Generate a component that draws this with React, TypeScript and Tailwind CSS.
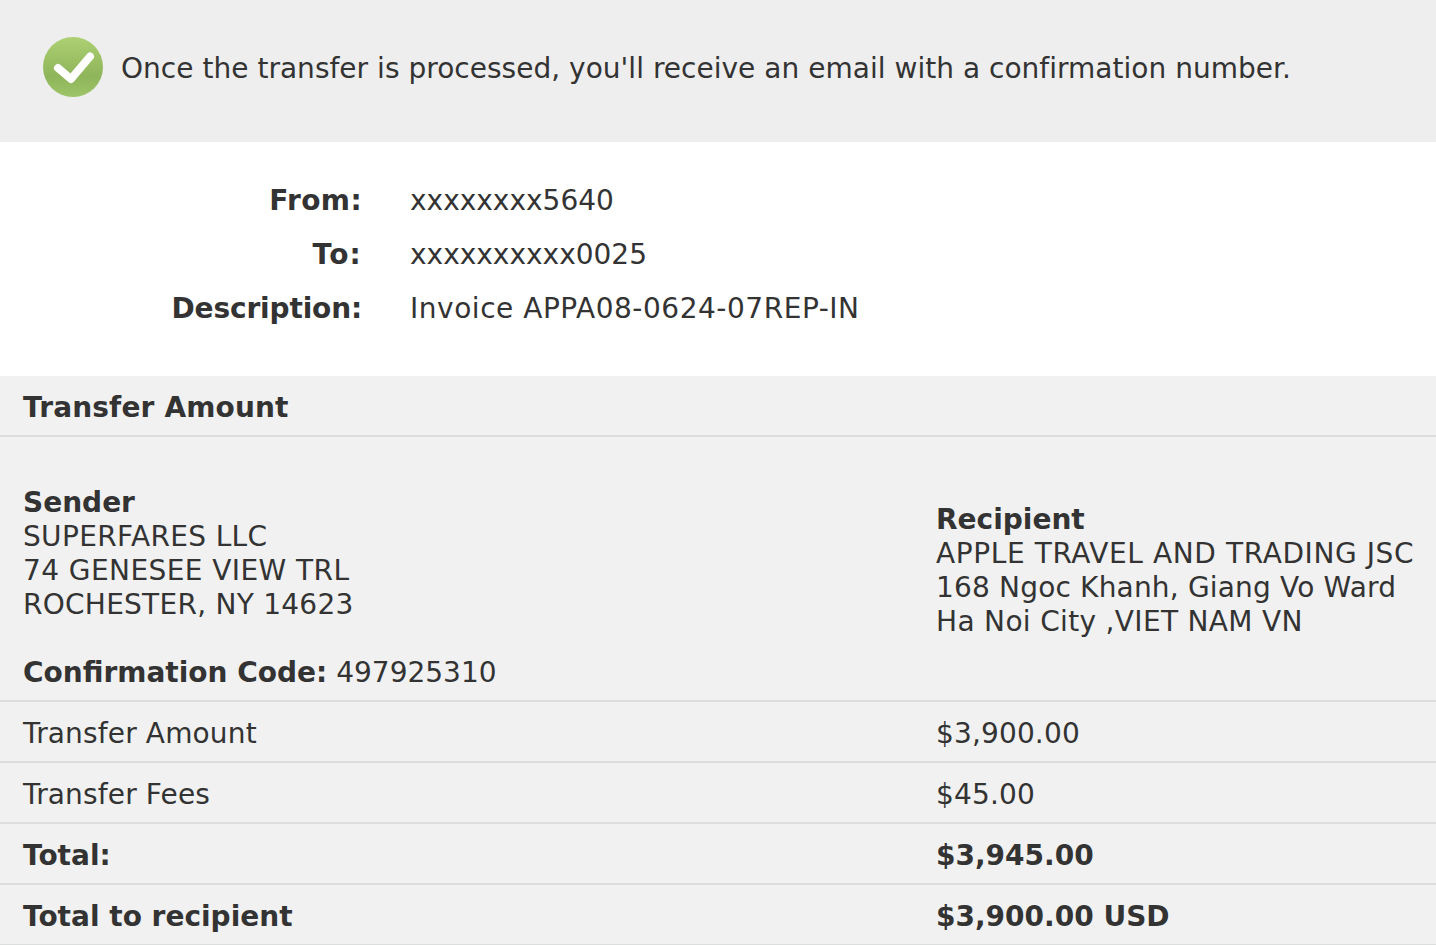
import React from 'react';

function CheckBadge() {
  return (
    <svg width="60" height="60" viewBox="0 0 60 60" className="shrink-0">
      <defs>
        <linearGradient id="badge" x1="0" y1="0" x2="0" y2="1">
          <stop offset="0%" stopColor="#add073" />
          <stop offset="65%" stopColor="#8fb55a" />
          <stop offset="100%" stopColor="#9ec468" />
        </linearGradient>
      </defs>
      <circle cx="30" cy="30" r="30" fill="url(#badge)" />
      <path d="M15 31 L28 42 L47 19.5" fill="none" stroke="#fff" strokeWidth="8" strokeLinecap="round" strokeLinejoin="round" />
    </svg>
  );
}

function Detail({ label, value, labelClass, valueClass }: { label: string; value: string; labelClass: string; valueClass?: string }) {
  return (
    <div className="flex h-[54px] items-center pt-[2px]">
      <div className={`w-[362px] text-right font-bold ${labelClass}`}>{label}</div>
      <div className={`pl-[48px] ${valueClass ?? ''}`}>{value}</div>
    </div>
  );
}

function Row({ label, value, bold }: { label: string; value: string; bold?: boolean }) {
  return (
    <div className={`flex h-[61px] items-center border-b-2 border-[#dcdddd] pl-[23px] pt-[4px] ${bold ? 'font-bold' : 'tracking-[0.15px]'}`}>
      <div className="w-[913px]">{label}</div>
      <div>{value}</div>
    </div>
  );
}

export default function App() {
  return (
    <div className="h-[945px] w-[1436px] overflow-hidden bg-white font-['Verdana','DejaVu_Sans',sans-serif] text-[28px] leading-[34px] text-[#333]">
      <div className="flex h-[142px] items-center gap-[18px] bg-[#eee] pb-[8px] pl-[43px]">
        <CheckBadge />
        <div className="pt-[4px] tracking-[0.025px]">Once the transfer is processed, you'll receive an email with a confirmation number.</div>
      </div>
      <div className="h-[234px] pt-[31px]">
        <Detail label="From:" value="xxxxxxxx5640" labelClass="tracking-[0.4px]" />
        <Detail label="To:" value="xxxxxxxxxx0025" labelClass="tracking-[1.2px]" />
        <Detail label="Description:" value="Invoice APPA08-0624-07REP-IN" labelClass="tracking-[-0.15px]" valueClass="tracking-[0.53px]" />
      </div>
      <div className="bg-[#f1f1f1]">
        <div className="flex h-[61px] items-center border-b-2 border-[#dcdddd] pl-[23px] pt-[4px] font-bold tracking-[0.15px]">Transfer Amount</div>
        <div className="flex h-[265px] border-b-2 border-[#dcdddd] pl-[23px]">
          <div className="w-[913px] pt-[49px]">
            <div className="font-bold">Sender</div>
            <div className="tracking-[0.35px]">SUPERFARES LLC</div>
            <div className="tracking-[0.42px]">74 GENESEE VIEW TRL</div>
            <div className="tracking-[0.26px]">ROCHESTER, NY 14623</div>
            <div className="mt-[34px]">
              <span className="font-bold">Confirmation Code:</span> 497925310
            </div>
          </div>
          <div className="pt-[66px]">
            <div className="font-bold">Recipient</div>
            <div className="tracking-[0.6px]">APPLE TRAVEL AND TRADING JSC</div>
            <div className="tracking-[0.18px]">168 Ngoc Khanh, Giang Vo Ward</div>
            <div className="tracking-[0.33px]">Ha Noi City ,VIET NAM VN</div>
          </div>
        </div>
        <Row label="Transfer Amount" value="$3,900.00" />
        <Row label="Transfer Fees" value="$45.00" />
        <Row label="Total:" value="$3,945.00" bold />
        <Row label="Total to recipient" value="$3,900.00 USD" bold />
      </div>
    </div>
  );
}
